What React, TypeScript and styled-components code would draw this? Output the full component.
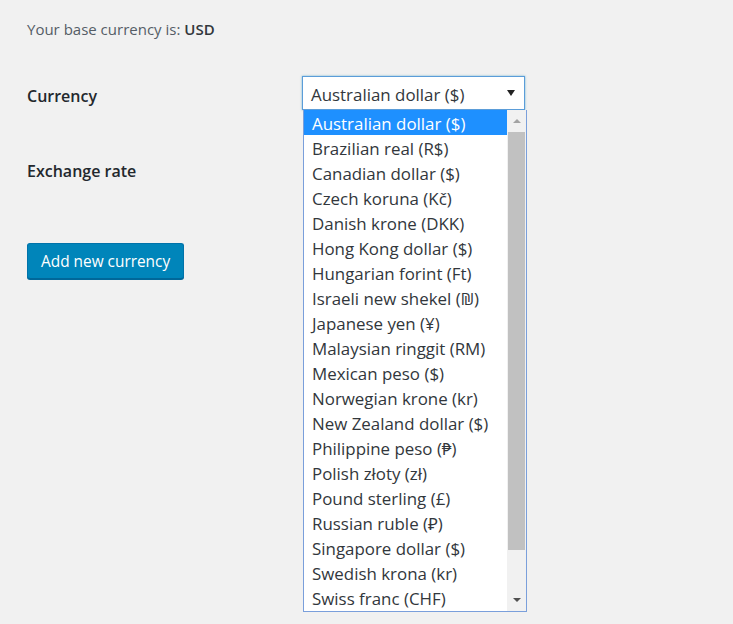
import React from 'react';
import styled, { createGlobalStyle } from 'styled-components';

const GlobalStyle = createGlobalStyle`
	html, body {
		margin: 0;
		padding: 0;
		background: #f1f1f1;
	}
	body {
		font-family: "Open Sans", "Noto Sans", sans-serif;
		color: #444;
	}
`;

const currencies = [
	'Australian dollar ($)',
	'Brazilian real (R$)',
	'Canadian dollar ($)',
	'Czech koruna (Kč)',
	'Danish krone (DKK)',
	'Hong Kong dollar ($)',
	'Hungarian forint (Ft)',
	'Israeli new shekel (₪)',
	'Japanese yen (¥)',
	'Malaysian ringgit (RM)',
	'Mexican peso ($)',
	'Norwegian krone (kr)',
	'New Zealand dollar ($)',
	'Philippine peso (₱)',
	'Polish złoty (zł)',
	'Pound sterling (£)',
	'Russian ruble (₽)',
	'Singapore dollar ($)',
	'Swedish krona (kr)',
	'Swiss franc (CHF)',
];

const Wrap = styled.div`
	padding: 20px 0 0 27px;
	width: 706px;
	height: 604px;
	overflow: hidden;
`;

const Notice = styled.p`
	margin: 0;
	font-size: 15px;
	line-height: 19px;
	color: #555d66;
	strong {
		font-weight: 600;
		color: #32373c;
	}
`;

const Table = styled.div`
	margin-top: 17px;
	display: grid;
	grid-template-columns: 275px 224px;
`;

const Label = styled.div`
	font-size: 16px;
	font-weight: 600;
	color: #23282d;
	height: 75px;
	padding-top: 29px;
	box-sizing: border-box;
`;

const Field = styled.div`
	height: 75px;
	padding-top: 20px;
	box-sizing: border-box;
	position: relative;
`;

const Select = styled.div`
	width: 223px;
	height: 34px;
	box-sizing: border-box;
	border: 1px solid #5b9dd9;
	box-shadow: 0 0 2px rgba(30, 140, 190, 0.6);
	background: #fff;
	display: flex;
	align-items: center;
	justify-content: space-between;
	padding: 2px 8px 0 8px;
	font-size: 16.9px;
	color: #32373c;
`;

const Caret = styled.span`
	width: 0;
	height: 0;
	border-left: 4px solid transparent;
	border-right: 4px solid transparent;
	border-top: 6px solid #222;
	margin-right: 1px;
	margin-bottom: 3px;
`;

const Dropdown = styled.div`
	position: absolute;
	top: 54px;
	left: 1px;
	width: 224px;
	height: 502px;
	box-sizing: border-box;
	border: 1px solid #7a9fdb;
	border-top: none;
	background: #fff;
	display: flex;
	z-index: 2;
`;

const List = styled.ul`
	list-style: none;
	margin: 0;
	padding: 0;
	flex: 1;
`;

const Option = styled.li<{ $active?: boolean }>`
	height: 25px;
	line-height: 27px;
	padding-left: 8px;
	font-size: 16.9px;
	white-space: nowrap;
	background: ${({ $active }) => ($active ? '#1e90ff' : '#fff')};
	color: ${({ $active }) => ($active ? '#fff' : '#32373c')};
`;

const Scrollbar = styled.div`
	width: 19px;
	background: #f1f1f1;
	display: flex;
	flex-direction: column;
	align-items: center;
`;

const Arrow = styled.span<{ $up?: boolean; $dim?: boolean }>`
	width: 0;
	height: 0;
	margin: 9px 0;
	border-left: 4px solid transparent;
	border-right: 4px solid transparent;
	${({ $up, $dim }) =>
		$up
			? `border-bottom: 4px solid ${$dim ? '#a3a3a3' : '#505050'};`
			: `border-top: 4px solid ${$dim ? '#a3a3a3' : '#505050'};`}
`;

const Thumb = styled.div`
	width: 17px;
	height: 418px;
	background: #c1c1c1;
	flex: none;
`;

const Spacer = styled.div`
	flex: 1;
`;

const Submit = styled.div`
	margin-top: 37px;
`;

const Button = styled.button`
	font-family: inherit;
	font-size: 15.4px;
	height: 36px;
	padding: 0 13px;
	border-radius: 3px;
	background: #0085ba;
	border: 1px solid #0073aa;
	border-bottom-color: #006799;
	box-shadow: 0 1px 0 #006799;
	color: #fff;
	cursor: pointer;
`;

export default function App() {
	return (
		<>
			<GlobalStyle />
			<Wrap>
				<Notice>
					Your base currency is: <strong>USD</strong>
				</Notice>
				<Table>
					<Label>Currency</Label>
					<Field>
						<Select>
							<span>Australian dollar ($)</span>
							<Caret />
						</Select>
						<Dropdown>
							<List>
								{currencies.map((c, i) => (
									<Option key={c} $active={i === 0}>
										{c}
									</Option>
								))}
							</List>
							<Scrollbar>
								<Arrow $up $dim />
								<Thumb />
								<Spacer />
								<Arrow />
							</Scrollbar>
						</Dropdown>
					</Field>
					<Label>Exchange rate</Label>
					<Field />
				</Table>
				<Submit>
					<Button>Add new currency</Button>
				</Submit>
			</Wrap>
		</>
	);
}
